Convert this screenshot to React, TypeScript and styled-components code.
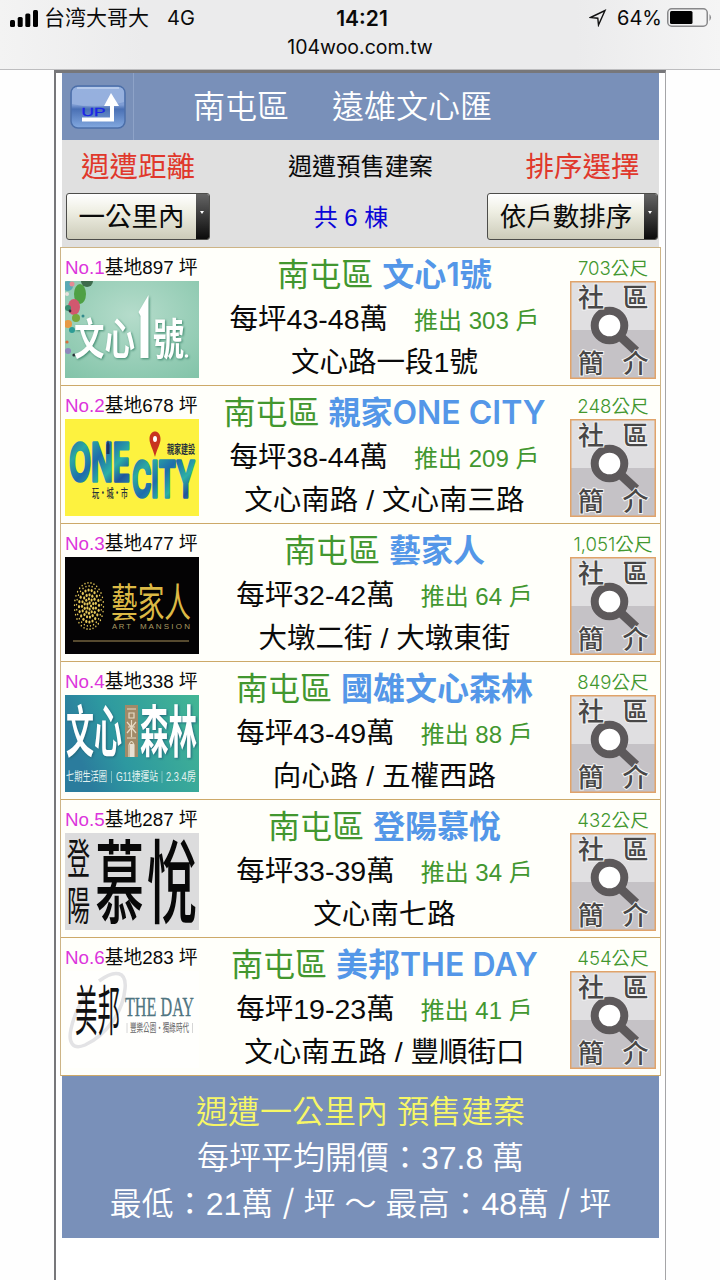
import styled, { createGlobalStyle } from 'styled-components';

type Project = {
  no: number;
  area: number;
  name: string;
  price: string;
  units: number;
  road: string;
  distance: string;
};

const projects: Project[] = [
  { no: 1, area: 897, name: '文心1號', price: '43-48', units: 303, road: '文心路一段1號', distance: '703' },
  { no: 2, area: 678, name: '親家ONE CITY', price: '38-44', units: 209, road: '文心南路 / 文心南三路', distance: '248' },
  { no: 3, area: 477, name: '藝家人', price: '32-42', units: 64, road: '大墩二街 / 大墩東街', distance: '1,051' },
  { no: 4, area: 338, name: '國雄文心森林', price: '43-49', units: 88, road: '向心路 / 五權西路', distance: '849' },
  { no: 5, area: 287, name: '登陽慕悅', price: '33-39', units: 34, road: '文心南七路', distance: '432' },
  { no: 6, area: 283, name: '美邦THE DAY', price: '19-23', units: 41, road: '文心南五路 / 豐順街口', distance: '454' },
];

const sans = `'Liberation Sans', 'Noto Sans CJK TC', sans-serif`;

type LogoTextProps = {
  x: number;
  y: number;
  w: number;
  size: number;
  fill: string;
  weight?: number;
  family?: string;
  stroke?: string;
  strokeWidth?: number;
  children: string;
};

// text squeezed into a fixed width, the way the banners are
function LogoText({ x, y, w, size, fill, weight = 400, family = sans, stroke, strokeWidth, children }: LogoTextProps) {
  return (
    <text
      x={x}
      y={y}
      textLength={w}
      lengthAdjust="spacingAndGlyphs"
      fontSize={size}
      fontWeight={weight}
      fontFamily={family}
      fill={fill}
      stroke={stroke}
      strokeWidth={strokeWidth}
      strokeLinejoin="round"
    >
      {children}
    </text>
  );
}

function WenxinLogo() {
  return (
    <Banner viewBox="0 0 134 97">
      <defs>
        <radialGradient id="mint" cx="0.5" cy="0.35" r="0.8">
          <stop offset="0" stopColor="#b5dccb" />
          <stop offset="1" stopColor="#83c4a9" />
        </radialGradient>
      </defs>
      <rect width="134" height="97" fill="url(#mint)" />
      <circle cx="22" cy="0" r="6" fill="#3d6b4c" />
      <ellipse cx="15" cy="13" rx="6" ry="10" fill="#4fa044" />
      <circle cx="3" cy="5" r="5" fill="#59a9b5" />
      <circle cx="7" cy="3" r="2.5" fill="#e48a93" />
      <circle cx="2" cy="13" r="2" fill="#e9e3dd" />
      <ellipse cx="9" cy="26" rx="6" ry="8" fill="#d1586f" />
      <circle cx="3" cy="27" r="3" fill="#3a8d70" />
      <circle cx="11" cy="37" r="4" fill="#77a83c" />
      <circle cx="3" cy="43" r="4" fill="#e79a45" />
      <circle cx="7" cy="49" r="3" fill="#2d9c95" />
      <circle cx="18" cy="35" r="1.5" fill="#32898c" />
      <circle cx="5" cy="30" r="1.4" fill="#2b3038" />
      <circle cx="3" cy="70" r="3" fill="#8f89bd" />
      <circle cx="2" cy="61" r="1.6" fill="#d6703d" />
      <circle cx="9" cy="74" r="1.6" fill="#2b3038" />
      <Shadow $color="#3f8a6f">
        <LogoText x={9} y={74} w={61} size={43} fill="#fff" weight={700}>文心</LogoText>
        <path d="M73.500 31 L83.500 14 V77 H75.500 V35 Z" fill="#fff" />
        <LogoText x={88} y={74} w={31} size={43} fill="#fff" weight={700}>號</LogoText>
        <circle cx="121.500" cy="75" r="1.800" fill="#fff" />
      </Shadow>
    </Banner>
  );
}

function OneCityLogo() {
  return (
    <Banner viewBox="0 0 134 97">
      <defs>
        <linearGradient id="ocean" x1="0" y1="0" x2="1" y2="1">
          <stop offset="0" stopColor="#21579f" />
          <stop offset="0.25" stopColor="#2ba8a4" />
          <stop offset="0.45" stopColor="#1f6cab" />
          <stop offset="0.65" stopColor="#2cb0a5" />
          <stop offset="0.8" stopColor="#21559c" />
          <stop offset="1" stopColor="#2a9fa8" />
        </linearGradient>
      </defs>
      <rect width="134" height="97" fill="#fdf23f" />
      <LogoText x={4} y={62} w={61} size={52} fill="url(#ocean)" weight={600} family="Inter, sans-serif" stroke="url(#ocean)" strokeWidth={3.5}>ONE</LogoText>
      <LogoText x={67} y={78} w={63} size={49} fill="url(#ocean)" weight={600} family="Inter, sans-serif" stroke="url(#ocean)" strokeWidth={3.5}>CITY</LogoText>
      <path d="M41.500 35 V26 L43 21 L44.500 26 V35 Z" fill="#1c3562" />
      <path d="M90 38 C88 30 84.500 25 84.500 20 C84.500 10 95.500 10 95.500 20 C95.500 25 92 30 90 38 Z" fill="#c8341f" />
      <ellipse cx="90" cy="20" rx="2" ry="3" fill="#fff" />
      <LogoText x={102} y={35} w={28} size={12} fill="#27313b" weight={700}>親家建設</LogoText>
      <LogoText x={27} y={79} w={36} size={12} fill="#27313b" weight={500}>玩・城・市</LogoText>
    </Banner>
  );
}

function ArtMansionLogo() {
  const rings = [2, 4.5, 7, 10, 12.5, 14.5];
  return (
    <Banner viewBox="0 0 134 97">
      <rect width="134" height="97" fill="#040304" />
      {rings.map((r, i) => {
        const count = 5 + i * 5;
        return Array.from({ length: count }, (_, k) => {
          const a = (k / count) * Math.PI * 2 + i * 0.3;
          return (
            <ellipse
              key={`${i}-${k}`}
              cx={24 + r * Math.cos(a)}
              cy={49 + r * 1.6 * Math.sin(a)}
              rx={i < 4 ? 1.1 : 0.7}
              ry={i < 4 ? 1.6 : 0.9}
              fill="#e3c659"
            />
          );
        });
      })}
      <LogoText x={46} y={60} w={80} size={40} fill="#dcb945">藝家人</LogoText>
      <LogoText x={47} y={72} w={11 + 8} size={8} fill="#a89a62">A R T</LogoText>
      <LogoText x={75} y={72} w={50} size={8} fill="#a89a62">M A N S I O N</LogoText>
      <path d="M8 84 H124" stroke="#a8925a" strokeWidth="1" />
    </Banner>
  );
}

function ForestLogo() {
  return (
    <Banner viewBox="0 0 134 97">
      <defs>
        <linearGradient id="forest" x1="0" y1="0.3" x2="1" y2="0">
          <stop offset="0" stopColor="#2b7c9d" />
          <stop offset="0.3" stopColor="#2d98a0" />
          <stop offset="1" stopColor="#43b694" />
        </linearGradient>
      </defs>
      <rect width="134" height="97" fill="url(#forest)" />
      <Shadow $color="#22677a">
        <LogoText x={1} y={57} w={56} size={56} fill="#fff" weight={700}>文心</LogoText>
        <LogoText x={75} y={57} w={57} size={56} fill="#fff" weight={700}>森林</LogoText>
      </Shadow>
      <rect x="60" y="10" width="13" height="52" fill="#a18a68" />
      <path
        d="M62 14 H71 M64 18 H69 V23 H64 Z M62 27 L71 38 M71 27 L62 38 M66.500 25 V42 M63 32 H70 M62 43 H71 M64 62 V50 Q66.500 43 69 50 V62"
        fill="none"
        stroke="#e6dbc5"
        strokeWidth="1.200"
      />
      <rect x="65" y="49" width="4" height="13" fill="#e8e1d4" />
      <LogoText x={1} y={86} w={41} size={12.5} fill="#e2f1ef">七期生活圈</LogoText>
      <LogoText x={51} y={86} w={42} size={12.5} fill="#e2f1ef">G11捷運站</LogoText>
      <LogoText x={101} y={86} w={30} size={12.5} fill="#e2f1ef">2.3.4房</LogoText>
      <path d="M46.500 76 V88 M97 76 V88" stroke="#8fcbc6" strokeWidth="0.800" />
    </Banner>
  );
}

function MuyueLogo() {
  return (
    <Banner viewBox="0 0 134 97">
      <rect width="134" height="97" fill="#dcdcdd" />
      <LogoText x={2} y={41} w={23} size={42} fill="#111">登</LogoText>
      <LogoText x={2} y={87} w={23} size={40} fill="#111">陽</LogoText>
      <LogoText x={30} y={83} w={49} size={91} fill="#080808" weight={500}>慕</LogoText>
      <LogoText x={82} y={83} w={50} size={91} fill="#080808" weight={500}>悅</LogoText>
    </Banner>
  );
}

function TheDayLogo() {
  return (
    <Banner viewBox="0 0 134 97">
      <rect width="134" height="97" fill="#fffffd" />
      <path d="M34 10 C50 -2 62 0 60 18 C58 40 42 64 20 74 C8 79 3 72 6 58 C9 44 16 30 24 20" fill="none" stroke="#e3e3e5" strokeWidth="3.500" />
      <LogoText x={10} y={60} w={45} size={54} fill="#111">美邦</LogoText>
      <LogoText x={60} y={45} w={69} size={27} fill="#4f7581" family="'Liberation Serif', serif" stroke="#4f7581" strokeWidth={0.3}>THE DAY</LogoText>
      <LogoText x={65} y={60.5} w={59} size={11} fill="#666">豐樂公園・獨綠時代</LogoText>
      <path d="M62 52 V62 M127.500 52 V62" stroke="#cccccc" strokeWidth="0.800" />
    </Banner>
  );
}

const logos = [WenxinLogo, OneCityLogo, ArtMansionLogo, ForestLogo, MuyueLogo, TheDayLogo];

function IntroButton() {
  return (
    <IntroIcon viewBox="0 0 86 98">
      <rect width="86" height="98" fill="#e0dfe1" />
      <rect y="49" width="86" height="49" fill="#c5c2c6" />
      <rect x="0.750" y="0.750" width="84.500" height="96.500" fill="none" stroke="#e0a36a" strokeWidth="1.500" />
      <path d="M51 56 L66 70" stroke="#5d595b" strokeWidth="9" />
      <circle cx="39.500" cy="44.500" r="14.800" fill="#fff" stroke="#5d595b" strokeWidth="8" />
      <g fontSize="26" fontWeight="500" fontFamily="'Noto Sans CJK TC', sans-serif" fill="#484747" stroke="#f2f2f2" strokeWidth="2" paintOrder="stroke">
        <text x="8" y="25.500">社</text>
        <text x="52.500" y="25.500">區</text>
        <text x="8" y="92">簡</text>
        <text x="52.500" y="92">介</text>
      </g>
    </IntroIcon>
  );
}

function UpButton() {
  return (
    <svg width="56" height="44" viewBox="0 0 56 44">
      <defs>
        <linearGradient id="glass" x1="0" y1="0" x2="0" y2="1">
          <stop offset="0" stopColor="#7f9fd6" />
          <stop offset="0.450" stopColor="#7f9dd4" />
          <stop offset="0.550" stopColor="#4a70b4" />
          <stop offset="1" stopColor="#83a9e0" />
        </linearGradient>
      </defs>
      <rect x="1" y="1" width="54" height="42" rx="7" fill="url(#glass)" stroke="#4c6fa9" strokeWidth="1.500" />
      <path d="M2 19 V8 Q2 2 8 2 H48 Q54 2 54 8 V17 Q28 25 2 19 Z" fill="#a9bfe6" opacity="0.550" />
      <path d="M7 3 H49" stroke="#d5e2f7" strokeWidth="1" />
      <path d="M12 34.500 H42 V20" fill="none" stroke="#fff" strokeWidth="4" />
      <path d="M41 8 L49 21 H34 Z" fill="#fff" />
      <text x="11.500" y="30.500" fontSize="10.500" textLength="24" lengthAdjust="spacingAndGlyphs" fontFamily={sans} fill="#1a26e6" stroke="#1a26e6" strokeWidth="0.300">
        UP
      </text>
    </svg>
  );
}

function StatusBar() {
  return (
    <Status>
      <StatusRow>
        <StatusSide>
          <svg width="29" height="18" viewBox="0 0 29 18">
            <rect x="0" y="11" width="5" height="7" rx="1.500" />
            <rect x="7.700" y="8" width="5" height="10" rx="1.500" />
            <rect x="15.300" y="4.500" width="5" height="13.500" rx="1.500" />
            <rect x="23" y="1" width="5" height="17" rx="1.500" />
          </svg>
          <Carrier>台湾大哥大</Carrier>
          <span>4G</span>
        </StatusSide>
        <Clock>14:21</Clock>
        <StatusSide $end>
          <svg width="18" height="18" viewBox="0 0 18 18">
            <path d="M1.500 8.500 L16 1.500 L9.500 16 L8.800 9.200 Z" fill="none" stroke="#111" strokeWidth="1.400" />
          </svg>
          <Percent>64%</Percent>
          <svg width="45" height="20" viewBox="0 0 45 20">
            <rect x="0.750" y="0.750" width="39.500" height="17.500" rx="4" fill="none" stroke="#88888a" strokeWidth="1.500" />
            <rect x="3" y="3" width="22.500" height="13" rx="1.500" />
            <path d="M42.500 6 Q45.500 9.500 42.500 13 Z" fill="#88888a" />
          </svg>
        </StatusSide>
      </StatusRow>
      <Address>104woo.com.tw</Address>
    </Status>
  );
}

export default function App() {
  return (
    <>
      <GlobalStyle />
      <StatusBar />
      <Frame>
        <Header>
          <UpCell>
            <UpButton />
          </UpCell>
          <HeaderTitle>
            <span>南屯區</span>
            <span>遠雄文心匯</span>
          </HeaderTitle>
        </Header>
        <Filters>
          <FilterColumn>
            <FilterLabel>週遭距離</FilterLabel>
            <Select>
              <SelectValue>一公里內</SelectValue>
              <SelectArrow />
            </Select>
          </FilterColumn>
          <FilterColumn $shift={24}>
            <FilterTitle>週遭預售建案</FilterTitle>
            <Count>共 6 棟</Count>
          </FilterColumn>
          <FilterColumn>
            <FilterLabel $shift={20}>排序選擇</FilterLabel>
            <Select>
              <SelectValue>依戶數排序</SelectValue>
              <SelectArrow />
            </Select>
          </FilterColumn>
        </Filters>
        <List>
          {projects.map((project, i) => {
            const Logo = logos[i];
            return (
              <Row key={project.no}>
                <Side>
                  <LandLabel>
                    <No>No.{project.no}</No>基地{project.area} 坪
                  </LandLabel>
                  <Logo />
                </Side>
                <Info>
                  <Name>
                    南屯區 <strong>{project.name}</strong>
                  </Name>
                  <Price>
                    每坪{project.price}萬<Units>推出 {project.units} 戶</Units>
                  </Price>
                  <Road>{project.road}</Road>
                </Info>
                <Side $center>
                  <Distance>{project.distance}公尺</Distance>
                  <IntroButton />
                </Side>
              </Row>
            );
          })}
        </List>
        <Summary>
          <SummaryTitle>週遭一公里內 預售建案</SummaryTitle>
          <p>每坪平均開價：37.8 萬</p>
          <p>
            最低：21萬 <Slash>/</Slash> 坪 ～ 最高：48萬 <Slash>/</Slash> 坪
          </p>
        </Summary>
      </Frame>
    </>
  );
}

const GlobalStyle = createGlobalStyle`
  * {
    box-sizing: border-box;
    margin: 0;
    padding: 0;
  }

  body {
    height: 1280px;
    overflow: hidden;
    background: #fefefe;
    color: #0a0a0a;
    font-family: ${sans};
  }

  svg {
    display: block;
    flex-shrink: 0;
  }
`;

const Status = styled.header`
  height: 70px;
  border-bottom: 1px solid #bdbdbf;
  background: linear-gradient(90deg, #f3f3f3, #ebebec 20%, #ebebec 80%, #f5f5f5);
  font-family: Inter, 'Noto Sans CJK SC', sans-serif;
`;

const StatusRow = styled.div`
  display: grid;
  grid-template-columns: 1fr auto 1fr;
  align-items: center;
  height: 36px;
  padding: 0 8px 0 10px;
  font-size: 20px;
`;

const StatusSide = styled.div<{ $end?: boolean }>`
  display: flex;
  align-items: center;
  justify-content: ${props => (props.$end ? 'flex-end' : 'flex-start')};
`;

const Carrier = styled.span`
  margin: 0 18px 0 5px;
  font-size: 21px;
  line-height: 30px;
`;

const Clock = styled.div`
  padding-left: 2px;
  font-size: 21px;
  font-weight: 600;
`;

const Percent = styled.span`
  margin: 0 5px 0 10px;
`;

const Address = styled.div`
  height: 22px;
  text-align: center;
  font-size: 19.5px;
  line-height: 22px;
`;

const Frame = styled.main`
  width: 612px;
  height: 1210px;
  margin-left: 54px;
  padding: 0 4px;
  border: solid #77777a;
  border-width: 3px 1px 0 2px;
  border-right-color: #a5a5a7;
  background: #ffffff;
`;

const Header = styled.div`
  display: flex;
  height: 67px;
  margin: 0 2px;
  background: #7990b9;
`;

const UpCell = styled.div`
  display: flex;
  align-items: center;
  width: 72px;
  padding-left: 8px;
  border-right: 1px solid #8ea3c8;
`;

const HeaderTitle = styled.h1`
  display: flex;
  gap: 43px;
  padding-left: 59px;
  color: #ffffff;
  font-size: 32px;
  font-weight: 350;
  line-height: 69px;
`;

const Filters = styled.div`
  display: grid;
  grid-template-columns: 144px 1fr 171px;
  height: 107px;
  margin: 0 2px;
  padding: 0 1px 0 4px;
  background: #e0e0e0;
`;

const FilterColumn = styled.div<{ $shift?: number }>`
  display: flex;
  flex-direction: column;
  align-items: center;
  padding-left: ${props => props.$shift ?? 0}px;
`;

const FilterLabel = styled.div<{ $shift?: number }>`
  height: 53px;
  padding-left: ${props => props.$shift ?? 0}px;
  color: #e0382c;
  font-size: 28.5px;
  line-height: 54px;
  white-space: nowrap;
`;

const FilterTitle = styled.div`
  height: 53px;
  font-size: 24.2px;
  line-height: 54px;
  white-space: nowrap;
`;

const Count = styled.div`
  margin-left: -19px;
  color: #0a05d8;
  font-size: 24px;
  line-height: 49px;
`;

const Select = styled.div`
  display: flex;
  width: 100%;
  height: 47px;
  border: 1px solid #4d4d4a;
  border-radius: 3px;
  background: linear-gradient(#ffffff, #eeeee2 40%, #cccbb9);
  overflow: hidden;
`;

const SelectValue = styled.div`
  flex: 1;
  font-size: 26.5px;
  line-height: 47px;
  text-align: center;
  white-space: nowrap;
`;

const SelectArrow = styled.div`
  width: 13px;
  background: linear-gradient(#646464, #0b0b0b);

  &::after {
    content: '';
    display: block;
    margin: 17px 0 0 4px;
    width: 0;
    border: solid transparent;
    border-width: 3px 2px 0;
    border-top-color: #ffffff;
  }
`;

const List = styled.div`
  border: 1px solid #cdb486;
  border-bottom: 0;
  background: #fffffa;
`;

const Row = styled.div`
  display: grid;
  grid-template-columns: 134px 1fr 86px;
  height: 138px;
  padding: 0 4px;
  border-bottom: 1px solid #cda968;
`;

const Side = styled.div<{ $center?: boolean }>`
  display: flex;
  flex-direction: column;
  align-items: ${props => (props.$center ? 'center' : 'flex-start')};
`;

const LandLabel = styled.div`
  height: 33px;
  font-size: 18.8px;
  line-height: 40px;
  white-space: nowrap;
`;

const No = styled.span`
  color: #dc35dc;
`;

const Banner = styled.svg`
  width: 134px;
  height: 97px;
`;

const Shadow = styled.g<{ $color: string }>`
  filter: drop-shadow(1px 1px 1px ${props => props.$color});
`;

const Info = styled.div`
  text-align: center;
  white-space: nowrap;
`;

const Name = styled.h2`
  height: 49px;
  color: #42972f;
  font-size: 32px;
  font-weight: 400;
  line-height: 53px;

  strong {
    color: #5497e8;
    font-family: Inter, 'Noto Sans CJK TC', sans-serif;
    font-weight: 600;
  }
`;

const Price = styled.div`
  height: 43px;
  font-size: 28.5px;
  line-height: 45px;
`;

const Units = styled.span`
  margin-left: 26px;
  color: #42972f;
  font-size: 24px;
`;

const Road = styled.div`
  height: 43px;
  font-size: 28.5px;
  line-height: 45px;
`;

const Distance = styled.div`
  height: 33px;
  color: #42972f;
  font-family: Inter, 'Noto Sans CJK TC', sans-serif;
  font-size: 18.6px;
  font-weight: 350;
  line-height: 40px;
  white-space: nowrap;
`;

const IntroIcon = styled.svg`
  width: 86px;
  height: 98px;
`;

const Summary = styled.footer`
  height: 162px;
  margin: 0 2px;
  padding-top: 13px;
  background: #7990b9;
  color: #ffffff;
  font-size: 32px;
  font-weight: 350;
  line-height: 46px;
  text-align: center;
  white-space: nowrap;
`;

const SummaryTitle = styled.p`
  color: #f7f766;
`;

const Slash = styled.span`
  font-family: Inter, sans-serif;
  font-size: 36px;
  font-weight: 300;
  line-height: 1;
`;
